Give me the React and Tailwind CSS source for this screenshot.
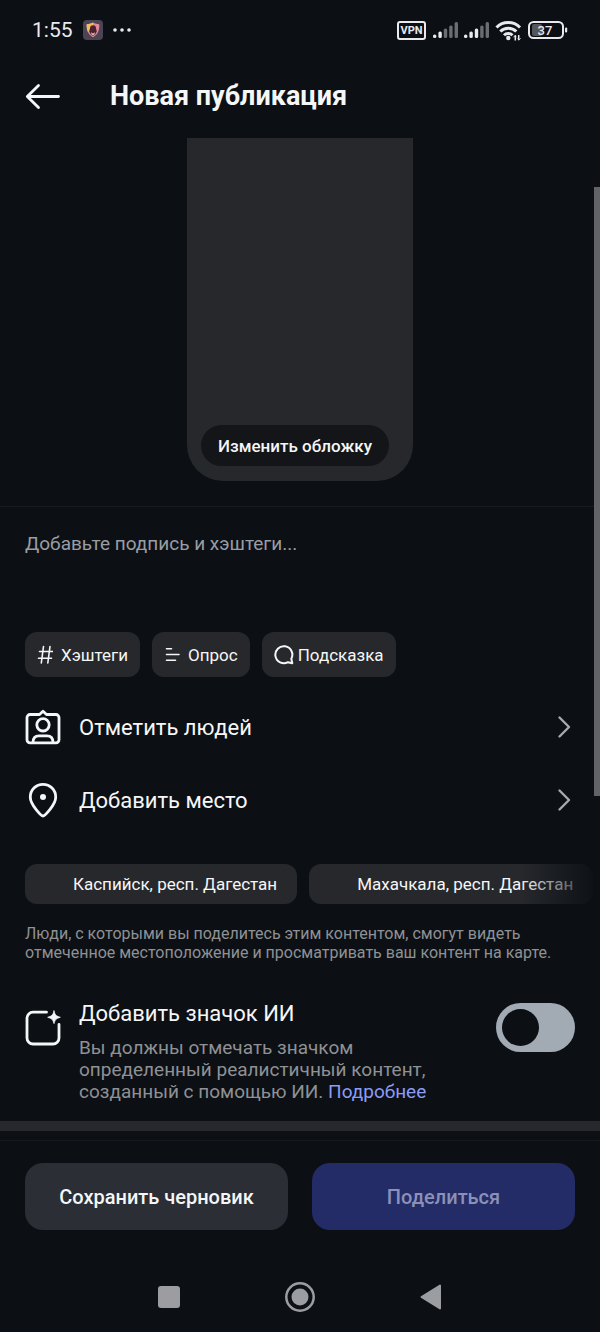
import { useState } from 'react';

function SignalBars({ level }) {
  const color = (n) => (n <= level ? '#e8eaed' : '#6b6d71');

  return (
    <svg width="26" height="18" viewBox="0 0 26 18">
      <rect x="0" y="13.5" width="3.4" height="3.5" rx="1.5" fill={color(1)} />
      <rect x="5.4" y="10.5" width="3.4" height="6.5" rx="1.5" fill={color(2)} />
      <rect x="10.8" y="7.5" width="3.4" height="9.5" rx="1.5" fill={color(3)} />
      <rect x="16.2" y="4.5" width="3.4" height="12.5" rx="1.5" fill={color(4)} />
      <rect x="21.6" y="1" width="3.4" height="16" rx="1.5" fill={color(5)} />
    </svg>
  );
}

function StatusBar() {
  return (
    <div className="flex h-15 items-center justify-between px-8 text-[#e8eaed]">
      <div className="flex items-center gap-2.5">
        <span className="text-[21px] leading-6">1:55</span>
        <svg width="20" height="20" viewBox="0 0 20 20">
          <rect width="20" height="20" rx="4" fill="#4a4455" />
          <path d="M10 2.5c2 1.2 4 1.6 6.3 1.7.2 5.5-1 9.8-6.3 13C4.7 14 3.5 9.7 3.7 4.2 6 4.1 8 3.700 10 2.500Z" fill="#e58a9a" />
          <path d="M10 2.5C8 3.700 6 4.100 3.700 4.200c-.1 3 .2 5.600 1.300 7.800L10 8Z" fill="#f0bd62" />
          <path d="M10 5.2c2 0 3 1.300 3 3l.8 3.200-1.600 3.200L10 16l-2.200-1.400-1.600-3.200.8-3.200c0-1.700 1-3 3-3Z" fill="#4b2430" />
          <path d="M8 12.200 10 13.500l2-1.300-.5 2.300L10 15.600l-1.500-1.100Z" fill="#e9b4a8" />
        </svg>
        <svg width="18" height="4" viewBox="0 0 18 4" fill="#e8eaed">
          <circle cx="2" cy="2" r="1.8" />
          <circle cx="9" cy="2" r="1.8" />
          <circle cx="16" cy="2" r="1.8" />
        </svg>
      </div>
      <div className="flex items-center gap-[5px]">
        <span className="flex h-[19px] w-[29px] items-center justify-center rounded-[3px] border-2 border-[#e8eaed] pt-px text-[11px] font-bold leading-3">
          VPN
        </span>
        <span className="ml-0.5">
          <SignalBars level={2} />
        </span>
        <SignalBars level={3} />
        <svg width="28" height="21" viewBox="0 0 28 21" fill="none" stroke="#e8eaed" strokeWidth="3">
          <path d="M1.500 7.500a16.500 16.500 0 0 1 23.500 0" />
          <path d="M5.300 11.500a11.300 11.300 0 0 1 16 0" />
          <path d="M9 15.200a6 6 0 0 1 8.500 0" />
          <circle cx="13.3" cy="18" r="2.2" fill="#e8eaed" stroke="none" />
          <path d="M20.300 20.500v-5M23.700 15v5" strokeWidth="1.5" />
          <path d="m18.500 17.300 1.800-2 .7 2M25.500 18.200l-1.800 2-.7-2" strokeWidth="1" />
        </svg>
        <svg width="40" height="18" viewBox="0 0 40 18">
          <rect x="4" y="3" width="10" height="12" rx="2" fill="#55575c" />
          <rect x="1" y="1" width="34" height="16" rx="4.5" fill="none" stroke="#e8eaed" strokeWidth="2" />
          <rect x="37" y="6.5" width="2.2" height="5" rx="1" fill="#e8eaed" />
          <text x="17" y="13.500" textAnchor="middle" fontSize="13" fontWeight="500" fill="#e8eaed">37</text>
        </svg>
      </div>
    </div>
  );
}

function ChevronIcon() {
  return (
    <svg width="14" height="24" viewBox="0 0 14 24" fill="none" stroke="#a6a9ae" strokeWidth="2.4" strokeLinecap="round" strokeLinejoin="round">
      <path d="m2.500 2.500 9.500 9.500-9.500 9.500" />
    </svg>
  );
}

function PersonTagIcon() {
  return (
    <svg width="36" height="36" viewBox="0 0 36 36" fill="none" stroke="#f5f6f7" strokeWidth="2.8" strokeLinecap="round" strokeLinejoin="round">
      <path d="M5 5.500h9.500L18 2.200l3.500 3.300H31a3 3 0 0 1 3 3v22.300a3 3 0 0 1-3 3H5a3 3 0 0 1-3-3V8.500a3 3 0 0 1 3-3Z" />
      <circle cx="18" cy="15.8" r="6.2" />
      <path d="M8 33.500c0-4.500 2.500-6.700 6-6.700h8c3.500 0 6 2.200 6 6.700" />
    </svg>
  );
}

function PinIcon() {
  return (
    <svg width="36" height="36" viewBox="0 0 36 36" fill="none" stroke="#f5f6f7" strokeWidth="2.8" strokeLinejoin="round">
      <path d="M18 34c-1.300 0-12.700-11-12.700-18.800A12.700 12.700 0 0 1 18 2.300a12.700 12.700 0 0 1 12.700 12.900C30.700 23 19.300 34 18 34Z" />
      <circle cx="18" cy="15" r="3" fill="#f5f6f7" stroke="none" />
    </svg>
  );
}

function AiLabelIcon() {
  return (
    <svg width="36" height="36" viewBox="0 0 36 36" fill="none" stroke="#f5f6f7" strokeWidth="2.8" strokeLinecap="round">
      <path d="M21.500 2.200H8A6 6 0 0 0 2 8.200v19.800A6 6 0 0 0 8 34h20a6 6 0 0 0 6-6V14.500" />
      <path d="M29 1c1.200 4.200 2 5 6.300 6.300C31 8.600 30.200 9.400 29 13.600c-1.200-4.200-2-5-6.300-6.300C27 6 27.800 5.200 29 1Z" fill="#f5f6f7" stroke="#f5f6f7" strokeWidth=".8" />
    </svg>
  );
}

const chips = [
  {
    label: 'Хэштеги',
    gap: 'gap-2',
    icon: (
      <svg width="16" height="20" viewBox="0 0 16 20" fill="none" stroke="#f5f6f7" strokeWidth="1.6" strokeLinecap="round">
        <path d="M6.500 1.500 4.300 18M13 1.500 10.800 18M2.500 6.500h13M1.500 13.300h13" />
      </svg>
    ),
  },
  {
    label: 'Опрос',
    gap: 'gap-2',
    icon: (
      <svg width="16" height="20" viewBox="0 0 16 20" fill="none" stroke="#f5f6f7" strokeWidth="1.6" strokeLinecap="round">
        <path d="M2.500 3.700h5M2.500 9.500h12.500M2.500 15.200h9" />
      </svg>
    ),
  },
  {
    label: 'Подсказка',
    gap: 'gap-1',
    icon: (
      <svg width="20" height="20" viewBox="0 0 20 20" fill="none" stroke="#f5f6f7" strokeWidth="2" strokeLinecap="round" strokeLinejoin="round">
        <path d="M18.300 18.300 17.300 13.800A8.500 8.500 0 1 0 13.900 17.200Z" />
      </svg>
    ),
  },
];

const rows = [
  { label: 'Отметить людей', Icon: PersonTagIcon },
  { label: 'Добавить место', Icon: PinIcon },
];

const places = ['Каспийск, респ. Дагестан', 'Махачкала, респ. Дагестан'];

export default function App() {
  const [caption, setCaption] = useState('');
  const [aiLabel, setAiLabel] = useState(false);

  return (
    <div className="relative flex min-h-screen flex-col bg-[#0c1014] font-[Roboto,sans-serif] text-[#f5f6f7]">
      <StatusBar />

      <header className="flex h-18 items-center gap-12 px-6">
        <button type="button" aria-label="Назад" className="w-[38px]">
          <svg width="38" height="28" viewBox="0 0 38 28" fill="none" stroke="#f5f6f7" strokeWidth="2.8" strokeLinecap="round" strokeLinejoin="round">
            <path d="M34.500 14.500H3.500M14.500 3.500 3.300 14.500l11.200 11" />
          </svg>
        </button>
        <h1 className="text-[27px] font-bold leading-8">Новая публикация</h1>
      </header>

      <main className="flex flex-1 flex-col pt-1.5">
        <div className="flex h-[343px] w-[226px] items-end self-center rounded-b-[36px] bg-[#26282c] px-3.5 pb-[15px]">
          <button type="button" className="h-[41px] w-[188px] rounded-full bg-[#131519] pt-0.5 text-[17px] font-medium">
            Изменить обложку
          </button>
        </div>

        <textarea
          aria-label="Подпись"
          placeholder="Добавьте подпись и хэштеги..."
          value={caption}
          onChange={(e) => setCaption(e.target.value)}
          className="mt-[25px] block h-[126px] w-full resize-none border-t border-[#171b1f] bg-transparent px-[25px] pt-[25px] text-[19px] leading-6 outline-none placeholder:text-[#9a9da3]"
        />

        <div className="flex gap-3 px-[25px]">
          {chips.map((chip) => (
            <button
              key={chip.label}
              type="button"
              className={`flex h-[45px] items-center rounded-xl bg-[#26282c] px-3 text-[17px] ${chip.gap}`}
            >
              {chip.icon}
              <span className="pt-0.5">{chip.label}</span>
            </button>
          ))}
        </div>

        <div className="mt-[13px] flex flex-col">
          {rows.map(({ label, Icon }) => (
            <button key={label} type="button" className="flex h-[73px] w-full items-center px-[25px] text-left">
              <Icon />
              <span className="ml-[18px] flex-1 pt-0.5 text-[22px] leading-7">{label}</span>
              <span className="mr-1">
                <ChevronIcon />
              </span>
            </button>
          ))}
        </div>

        <div className="relative mt-7 flex gap-3 overflow-hidden pl-[25px]">
          {places.map((place) => (
            <button
              key={place}
              type="button"
              className="h-10 shrink-0 whitespace-nowrap rounded-xl bg-[#26282c] pl-12 pr-5 pt-0.5 text-[17px]"
            >
              {place}
            </button>
          ))}
          <div className="pointer-events-none absolute inset-y-0 right-0 w-20 bg-linear-to-r from-transparent to-[#0c1014]" />
        </div>

        <p className="mt-5 px-[25px] text-[16px] leading-[19px] text-[#8f9195]">
          Люди, с которыми вы поделитесь этим контентом, смогут видеть отмеченное местоположение и просматривать ваш контент на карте.
        </p>

        <div className="mt-[37px] flex items-start px-[25px] pb-[18px]">
          <div className="mt-[11px]">
            <AiLabelIcon />
          </div>
          <div className="ml-[18px] flex-1 pr-10">
            <label htmlFor="ai-label" className="block text-[22px] leading-[30px]">
              Добавить значок ИИ
            </label>
            <p className="mt-2 text-[19px] leading-[22px] text-[#8f9195]">
              Вы должны отмечать значком определенный реалистичный контент, созданный с помощью ИИ.{' '}
              <a href="#more" className="text-[#8b9cf7]">Подробнее</a>
            </p>
          </div>
          <input
            id="ai-label"
            type="checkbox"
            role="switch"
            checked={aiLabel}
            onChange={(e) => setAiLabel(e.target.checked)}
            className="mt-1 flex h-[49px] w-[79px] shrink-0 cursor-pointer appearance-none items-center rounded-full bg-[#a2aab4] px-1.5 before:size-[37px] before:rounded-full before:bg-[#0c1014] checked:justify-end"
          />
        </div>

        <div className="h-2.5 bg-[#26282c]" />
      </main>

      <footer className="mt-[9px] border-t border-[#14181c]">
        <div className="grid grid-cols-2 gap-6 px-[25px] pt-[22px]">
          <button type="button" className="h-[67px] rounded-[18px] bg-[#2b2e34] text-[20px] font-medium">
            Сохранить черновик
          </button>
          <button type="button" className="h-[67px] rounded-[18px] bg-[#232c66] text-[20px] font-medium text-[#8b90b8]">
            Поделиться
          </button>
        </div>
        <nav className="flex h-[102px] items-center justify-center gap-[101px] pt-8">
          <button type="button" aria-label="Недавние">
            <svg width="30" height="30" viewBox="0 0 30 30" fill="#9c9da0">
              <rect x="4" y="4" width="22" height="22" rx="3" />
            </svg>
          </button>
          <button type="button" aria-label="Домой">
            <svg width="30" height="30" viewBox="0 0 30 30">
              <circle cx="15" cy="15" r="13.7" fill="none" stroke="#9c9da0" strokeWidth="2.5" />
              <circle cx="15" cy="15" r="8.5" fill="#9c9da0" />
            </svg>
          </button>
          <button type="button" aria-label="Назад в системе">
            <svg width="30" height="30" viewBox="0 0 30 30" fill="#9c9da0" stroke="#9c9da0" strokeWidth="2" strokeLinejoin="round">
              <path d="M24 3.500v23L5.500 15Z" />
            </svg>
          </button>
        </nav>
      </footer>

      <div className="absolute right-0 top-[187px] h-[609px] w-1.5 bg-[#626367]" />
    </div>
  );
}
